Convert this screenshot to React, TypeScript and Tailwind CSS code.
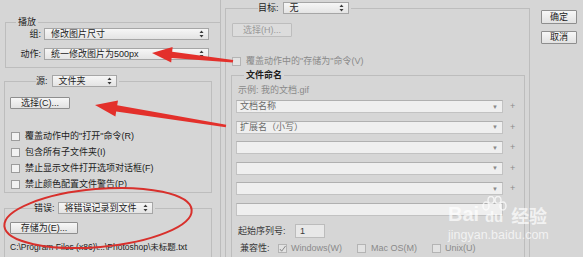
import React from 'react';

// Photoshop batch dialog (light UI), with red annotation marks on top

const font = "font-['Liberation_Sans','Noto_Sans_CJK_SC',sans-serif]";

const UpDown: React.FC = () => (
  <svg width="5" height="8" viewBox="0 0 5 8" className="shrink-0">
    <path d="M2.5 0.5 L4.5 3 L0.5 3 Z" fill="#3a3a3a" />
    <path d="M2.5 7.5 L4.5 5 L0.5 5 Z" fill="#3a3a3a" />
  </svg>
);

const Select: React.FC<{ value: string; className?: string }> = ({ value, className = '' }) => (
  <div
    className={`flex h-[12px] items-center justify-between border border-[#a6a6a6] bg-linear-to-b from-[#f6f6f6] to-[#e4e4e4] pl-[6px] pr-[4px] text-[9px] leading-none text-[#1c1c1c] ${className}`}
  >
    <span>{value}</span>
    <UpDown />
  </div>
);

const Button: React.FC<{ label: string; className?: string; disabled?: boolean }> = ({ label, className = '', disabled }) => (
  <div
    className={`flex items-center justify-center rounded-[1px] border text-[9px] leading-none ${
      disabled
        ? 'border-[#bdbdbd] bg-[#dcdcdc] text-[#9a9a9a]'
        : 'border-[#8e8e8e] bg-linear-to-b from-[#f7f7f7] to-[#e2e2e2] text-[#1c1c1c]'
    } ${className}`}
  >
    {label}
  </div>
);

const Check: React.FC<{ checked?: boolean; dim?: boolean }> = ({ checked, dim }) => (
  <div
    className={`flex h-[9px] w-[9px] shrink-0 items-center justify-center border ${
      dim ? 'border-[#b4b4b4] bg-[#e2e2e2]' : 'border-[#9c9c9c] bg-[#f2f2f2]'
    }`}
  >
    {checked && (
      <svg width="8" height="8" viewBox="0 0 8 8">
        <path d="M1 4 L3 6.5 L7.5 0.5" fill="none" stroke="#7a7a7a" strokeWidth="1" />
      </svg>
    )}
  </div>
);

const NameRow: React.FC<{ value?: string; bare?: boolean }> = ({ value = '', bare }) => (
  <div className="flex items-center">
    <div className="flex h-[13px] w-[267px] items-center justify-between border border-[#c2c2c2] border-t-[#b0b0b0] bg-[#efefef] pl-[3px] pr-[4px] text-[9px] leading-none text-[#6a6a6a]">
      <span>{value}</span>
      {!bare && <span className="text-[6px] text-[#8a8a8a]">▼</span>}
    </div>
    {!bare && <span className="ml-[7px] text-[9px] leading-none text-[#8c8c8c]">+</span>}
  </div>
);

const checks = [
  '覆盖动作中的"打开"命令(R)',
  '包含所有子文件夹(I)',
  '禁止显示文件打开选项对话框(F)',
  '禁止颜色配置文件警告(P)',
];

const Annotations: React.FC = () => (
  <svg className="pointer-events-none absolute inset-0" width="583" height="257" viewBox="0 0 583 257">
    {/* arrow to 动作 */}
    <polygon
      points="152,53 172.6,47 172.2,51.8 233.2,60 232.8,62.4 171.6,58 171.2,62.6"
      fill="#e3302b"
    />
    {/* arrow to 选择(C) */}
    <polygon
      points="95,105 118,100.4 117.2,105.3 226.2,124.8 225.8,127.2 116.2,111.6 115.4,116.6"
      fill="#e3302b"
    />
    {/* ring around 错误 group */}
    <ellipse
      cx="98"
      cy="218"
      rx="94"
      ry="29"
      transform="rotate(-5 98 218)"
      fill="none"
      stroke="#d8302c"
      strokeWidth="2"
    />
  </svg>
);

const Watermark: React.FC = () => (
  <div className="pointer-events-none absolute left-[448px] top-[196px] flex flex-col items-start text-white/70">
    <div className="flex items-end">
      <span className="font-['Liberation_Sans',sans-serif] text-[20px] font-bold leading-none">Bai</span>
      <div className="relative ml-[2px] flex h-[28px] w-[26px] items-end justify-center">
        <svg className="absolute left-0 top-0" width="26" height="18" viewBox="0 0 26 18">
          <ellipse cx="5" cy="10" rx="3" ry="4" fill="none" stroke="white" strokeOpacity="0.7" strokeWidth="1.5" />
          <ellipse cx="10" cy="4" rx="3" ry="3.5" fill="none" stroke="white" strokeOpacity="0.7" strokeWidth="1.5" />
          <ellipse cx="17" cy="4" rx="3" ry="3.5" fill="none" stroke="white" strokeOpacity="0.7" strokeWidth="1.5" />
          <ellipse cx="22" cy="10" rx="3" ry="4" fill="none" stroke="white" strokeOpacity="0.7" strokeWidth="1.5" />
        </svg>
        <span className="font-['Liberation_Sans',sans-serif] text-[15px] font-bold leading-none">du</span>
      </div>
      <span className="ml-[4px] font-['Noto_Sans_CJK_SC',sans-serif] text-[18px] font-bold leading-none">经验</span>
    </div>
    <span className="mt-[5px] font-['Liberation_Sans',sans-serif] text-[12.5px] leading-none">jingyan.baidu.com</span>
  </div>
);

export default function App() {
  return (
    <div className={`relative flex h-[257px] w-[583px] overflow-hidden bg-[#d6d6d6] ${font}`}>
      {/* left column */}
      <div className="flex w-[221px] shrink-0 flex-col border-r border-[#bcbcbc]">
        <fieldset className="ml-[5px] mt-[16px] w-[216px] border border-[#bdbdbd] border-r-0 pb-[7px]">
          <legend className="ml-[10px] px-[2px] text-[9px] leading-[12px] text-[#1c1c1c]">播放</legend>
          <div className="flex flex-col gap-[8px]">
            <div className="flex items-center">
              <span className="w-[38px] pr-[3px] text-right text-[9px] leading-none text-[#1c1c1c]">组:</span>
              <Select value="修改图片尺寸" className="w-[165px]" />
            </div>
            <div className="flex items-center">
              <span className="w-[38px] pr-[3px] text-right text-[9px] leading-none text-[#1c1c1c]">动作:</span>
              <Select value="统一修改图片为500px" className="w-[165px]" />
            </div>
          </div>
        </fieldset>

        <fieldset className="ml-[4px] mt-[7px] w-[208px] border border-[#bdbdbd] pb-[0px]">
          <legend className="ml-[31px] flex items-center pr-[2px] text-[9px] leading-none text-[#1c1c1c]">
            <span className="mr-[4px]">源:</span>
            <Select value="文件夹" className="w-[65px] pl-[5px]" />
          </legend>
          <Button label="选择(C)..." className="ml-[5px] mt-[10px] h-[12px] w-[60px]" />
          <div className="mt-[19px] flex flex-col">
            {checks.map((c) => (
              <div key={c} className="flex h-[16px] items-center pl-[6px]">
                <Check />
                <span className="ml-[5px] text-[9px] leading-none text-[#1c1c1c]">{c}</span>
              </div>
            ))}
          </div>
        </fieldset>

        <fieldset className="ml-[4px] mt-[9px] w-[208px] flex-1 border border-b-0 border-[#bdbdbd]">
          <legend className="ml-[29px] flex items-center pr-[2px] text-[9px] leading-none text-[#1c1c1c]">
            <span className="mr-[3px]">错误:</span>
            <Select value="将错误记录到文件" className="w-[95px]" />
          </legend>
          <Button label="存储为(E)..." className="ml-[5px] mt-[8px] h-[12px] w-[68px]" />
          <div className="ml-[5px] mt-[8px] whitespace-nowrap text-[8.5px] leading-[10px] text-[#1c1c1c]">
            C:\Program Files (x86)\...\Photoshop\未标题.txt
          </div>
        </fieldset>
      </div>

      {/* middle column */}
      <div className="flex w-[309px] shrink-0 flex-col">
        <fieldset className="ml-[4px] mt-[2px] flex-1 border border-b-0 border-[#bdbdbd]">
          <legend className="ml-[32px] flex items-center pr-[2px] text-[9px] leading-none text-[#1c1c1c]">
            <span className="mr-[4px]">目标:</span>
            <Select value="无" className="w-[66px]" />
          </legend>
          <Button label="选择(H)..." disabled className="ml-[6px] mt-[9px] h-[14px] w-[60px]" />
          <div className="ml-[6px] mt-[20px] flex h-[9px] items-center">
            <Check dim />
            <span className="ml-[5px] text-[9px] leading-none text-[#8a8a8a]">覆盖动作中的"存储为"命令(V)</span>
          </div>

          <fieldset className="ml-[5px] mr-[4px] mt-[3px] border border-b-0 border-[#bdbdbd] pb-[4px]">
            <legend className="ml-[12px] px-[2px] text-[9px] font-bold leading-[12px] text-[#1c1c1c]">文件命名</legend>
            <div className="ml-[6px] mt-[3px] text-[9px] leading-[12px] text-[#8a8a8a]">示例: 我的文档.gif</div>
            <div className="ml-[4px] mt-[4px] flex flex-col gap-[7.5px]">
              <NameRow value="文档名称" />
              <NameRow value="扩展名（小写）" />
              <NameRow />
              <NameRow />
              <NameRow />
              <NameRow bare />
            </div>
            <div className="ml-[6px] mt-[8.5px] flex items-center">
              <span className="w-[57px] text-[9px] leading-none text-[#3a3a3a]">起始序列号:</span>
              <div className="flex h-[14px] w-[30px] items-center border border-[#bcbcbc] bg-[#e8e8e8] pl-[4px] text-[9px] leading-none text-[#3a3a3a]">
                1
              </div>
            </div>
            <div className="ml-[8px] mt-[4.5px] flex h-[12px] items-center text-[9px] leading-none text-[#8a8a8a]">
              <span className="w-[38px] text-[#3a3a3a]">兼容性:</span>
              <Check checked dim />
              <span className="ml-[4px]">Windows(W)</span>
              <span className="ml-[15px]">
                <Check dim />
              </span>
              <span className="ml-[5px]">Mac OS(M)</span>
              <span className="ml-[15px]">
                <Check dim />
              </span>
              <span className="ml-[4px]">Unix(U)</span>
            </div>
          </fieldset>
        </fieldset>
      </div>

      {/* right column */}
      <div className="flex flex-1 flex-col pl-[11px]">
        <Button label="确定" className="mt-[10px] h-[14px] w-[36px] border-[#6f6f6f]" />
        <Button label="取消" className="mt-[7px] h-[13px] w-[36px]" />
      </div>

      <Watermark />
      <Annotations />
    </div>
  );
}
